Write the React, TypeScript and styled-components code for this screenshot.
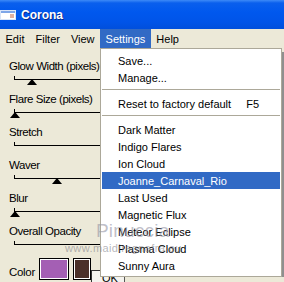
import styled, { createGlobalStyle } from "styled-components";

const GlobalStyle = createGlobalStyle`
  body {
    margin: 0;
    font-family: "Liberation Sans", Arial, sans-serif;
    background: #ece9d8;
  }
`

const sliders = [
  { label: "Glow Width (pixels)", thumb: 18 },
  { label: "Flare Size (pixels)", thumb: 1 },
  { label: "Stretch", thumb: null },
  { label: "Waver", thumb: 43 },
  { label: "Blur", thumb: 1 },
  { label: "Overall Opacity", thumb: null },
];

const presets = [
  "Dark Matter",
  "Indigo Flares",
  "Ion Cloud",
  "Joanne_Carnaval_Rio",
  "Last Used",
  "Magnetic Flux",
  "Meteor Eclipse",
  "Plasma Cloud",
  "Sunny Aura",
];

const WindowIcon = () => (
  <svg width="16" height="10" viewBox="0 0 16 10">
    <rect x="0.5" y="0.5" width="15" height="9" fill="#ffffff" stroke="#d8e4f8" />
    <rect x="1" y="1" width="14" height="2" fill="#7ea6e8" />
    <rect x="10" y="4" width="4" height="4" fill="#e0b0a0" />
  </svg>
);

export default function App() {
  return (
    <Window>
      <GlobalStyle />
      <TitleBar>
        <WindowIcon />
        <Title>Corona</Title>
      </TitleBar>
      <MenuBar>
        <MenuItem>Edit</MenuItem>
        <MenuItem>Filter</MenuItem>
        <MenuItem>View</MenuItem>
        <MenuItem $active>Settings</MenuItem>
        <MenuItem>Help</MenuItem>
      </MenuBar>
      <Body>
        <Panel>
          {sliders.map((s) => (
            <Group key={s.label}>
              <Label>{s.label}</Label>
              <Slider>
                {s.thumb !== null && <Thumb style={{ left: s.thumb }} />}
              </Slider>
            </Group>
          ))}
          <ColorRow>
            <ColorLabel>Color</ColorLabel>
            <Swatch $color="#a45fb4" $width={30} />
            <Swatch $color="#4b3029" $width={18} />
            <OkButton>OK</OkButton>
          </ColorRow>
        </Panel>
        <Preview />
      </Body>

      <Dropdown>
        <DropItem>Save...</DropItem>
        <DropItem>Manage...</DropItem>
        <Separator />
        <DropItem>
          <span>Reset to factory default</span>
          <Shortcut>F5</Shortcut>
        </DropItem>
        <Separator />
        {presets.map((p) => (
          <DropItem key={p} $active={p === "Joanne_Carnaval_Rio"}>
            {p}
          </DropItem>
        ))}
      </Dropdown>

      <Watermark>
        <WatermarkName>Pinuccia</WatermarkName>
        <WatermarkUrl>www.maidiregnafra.eu</WatermarkUrl>
      </Watermark>
    </Window>
  );
}

const Window = styled.div`
  width: 284px;
  height: 282px;
  position: relative;
  overflow: hidden;
  display: flex;
  flex-direction: column;
  background: #ece9d8;
`

const TitleBar = styled.div`
  height: 29px;
  flex-shrink: 0;
  display: flex;
  align-items: center;
  gap: 5px;
  padding-top: 1px;
  box-sizing: border-box;
  background: linear-gradient(#3d8af7 0px, #0a5fed 3px, #0058ee 12px, #0054e8 22px, #004fdc 29px);
`

const Title = styled.span`
  color: #ffffff;
  font-weight: bold;
  font-size: 12px;
  text-shadow: 1px 1px 0 #0a2a8a;
`

const MenuBar = styled.div`
  height: 19px;
  flex-shrink: 0;
  display: flex;
  font-size: 11px;
  background: #ece9d8;
`

const MenuItem = styled.div<{ $active?: boolean }>`
  padding: 0 5.5px;
  display: flex;
  align-items: center;
  color: ${(p) => (p.$active ? "#ffffff" : "#000000")};
  background: ${(p) => (p.$active ? "#316ac5" : "transparent")};
`

const Body = styled.div`
  flex: 1;
  display: flex;
  min-height: 0;
`

const Panel = styled.div`
  flex: 1;
  display: flex;
  flex-direction: column;
  padding: 12px 0 0 9px;
`

const Group = styled.div`
  height: 33.8px;
  display: flex;
  flex-direction: column;
`

const Label = styled.div`
  height: 13px;
  line-height: 13px;
  font-size: 11.5px;
  letter-spacing: -0.45px;
  color: #000000;
  white-space: nowrap;
`

const Slider = styled.div`
  position: relative;
  height: 20px;

  &::before {
    content: "";
    position: absolute;
    left: 5px;
    right: 0;
    top: 6px;
    height: 1px;
    background: #000000;
  }

  &::after {
    content: "";
    position: absolute;
    left: 5px;
    top: 3px;
    width: 1px;
    height: 3px;
    background: #000000;
  }
`

const Thumb = styled.div`
  position: absolute;
  top: 6px;
  width: 0;
  height: 0;
  border-left: 5.5px solid transparent;
  border-right: 5.5px solid transparent;
  border-bottom: 6px solid #000000;
`

const ColorRow = styled.div`
  display: flex;
  align-items: flex-start;
  height: 30px;
`

const ColorLabel = styled.div`
  margin-top: 8px;
  width: 30px;
  font-size: 11.5px;
  letter-spacing: -0.3px;
  line-height: 13px;
`

const Swatch = styled.div<{ $color: string; $width: number }>`
  width: ${(p) => p.$width}px;
  height: 22px;
  margin-right: 4px;
  box-sizing: border-box;
  border: 1px solid #000000;
  box-shadow: inset 0 0 0 1px #ffffff;
  background: ${(p) => p.$color};
`

const OkButton = styled.div`
  margin-top: 12px;
  margin-left: -4px;
  width: 34px;
  height: 20px;
  box-sizing: border-box;
  border: 1px solid #333333;
  border-right-color: #555555;
  padding: 1px 0 0 10px;
  font-size: 11px;
  background: #f4f3ee;
`

const Preview = styled.div`
  width: 100px;
  margin: 4px -4px 5px 0;
  background: #8f8f8f;
`

const Dropdown = styled.div`
  position: absolute;
  left: 100px;
  top: 48px;
  width: 182px;
  box-sizing: border-box;
  padding: 3px 1px 2px;
  background: #ffffff;
  border: 1px solid #aca899;
  font-size: 11px;
  color: #000000;
`

const DropItem = styled.div<{ $active?: boolean }>`
  height: 17px;
  display: flex;
  align-items: center;
  justify-content: space-between;
  padding: 0 21px 0 16px;
  white-space: nowrap;
  color: ${(p) => (p.$active ? "#ffffff" : "#000000")};
  background: ${(p) => (p.$active ? "#316ac5" : "transparent")};
`

const Shortcut = styled.span`
  margin-left: 8px;
`

const Separator = styled.div`
  height: 9px;
  position: relative;

  &::before {
    content: "";
    position: absolute;
    left: 0;
    right: 0;
    top: 3px;
    height: 1px;
    background: #aca899;
  }
`

const Watermark = styled.div`
  position: absolute;
  left: 65px;
  top: 220px;
  display: flex;
  flex-direction: column;
  pointer-events: none;
`

const WatermarkName = styled.div`
  margin-left: 31px;
  font-size: 19px;
  line-height: 22px;
  color: rgba(150, 150, 165, 0.6);
  letter-spacing: 0.2px;
`

const WatermarkUrl = styled.div`
  font-size: 11px;
  line-height: 12px;
  color: rgba(120, 120, 130, 0.55);
  letter-spacing: 0.4px;
`
